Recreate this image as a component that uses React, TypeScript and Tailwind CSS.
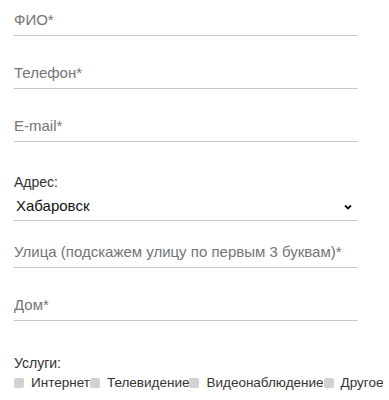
import React from 'react';

const font = { fontFamily: '"Liberation Sans", Arial, sans-serif' };

interface FieldProps {
  placeholder: string;
  className?: string;
}

const Field: React.FC<FieldProps> = ({ placeholder, className = '' }) => (
  <div className={`border-b border-[#c8c8c8] pb-[5px] ${className}`}>
    <input
      type="text"
      placeholder={placeholder}
      className="block h-[20px] w-full bg-transparent text-[15px] leading-[20px] text-[#333] placeholder:text-[#757575] outline-none"
    />
  </div>
);

const services = ['Интернет', 'Телевидение', 'Видеонаблюдение', 'Другое'];

export default function App() {
  return (
    <div className="min-h-[400px] bg-white" style={font}>
      <form className="ml-[14px] flex w-[344px] flex-col">
        <Field placeholder="ФИО*" className="mt-[10px]" />
        <Field placeholder="Телефон*" className="mt-[27px]" />
        <Field placeholder="E-mail*" className="mt-[27px]" />

        <label className="mt-[31px] text-[14px] leading-[18px] text-[#333]">Адрес:</label>
        <div className="mt-[5px] flex h-[25px] items-start justify-between border-b border-[#c8c8c8] pl-[2px] pr-[6px]">
          <span className="text-[15px] leading-[20px] text-[#111]">Хабаровск</span>
          <svg width="8" height="6" viewBox="0 0 8 6" fill="none" className="mt-[8px]">
            <path d="M1 1.5 L4 4.5 L7 1.5" stroke="#111" strokeWidth="1.8" />
          </svg>
        </div>

        <Field placeholder="Улица (подскажем улицу по первым 3 буквам)*" className="mt-[21px]" />
        <Field placeholder="Дом*" className="mt-[27px]" />

        <div className="mt-[33px] text-[14px] leading-[18px] text-[#333]">Услуги:</div>
        <div className="mt-[3px] flex items-center whitespace-nowrap text-[13.5px] leading-[16px] text-[#333]">
          {services.map((s) => (
            <label key={s} className="flex items-center">
              <span className="mr-[7px] inline-block h-[10px] w-[10px] rounded-[2px] bg-[#d2d2d2]" />
              {s}
            </label>
          ))}
        </div>
      </form>
    </div>
  );
}
